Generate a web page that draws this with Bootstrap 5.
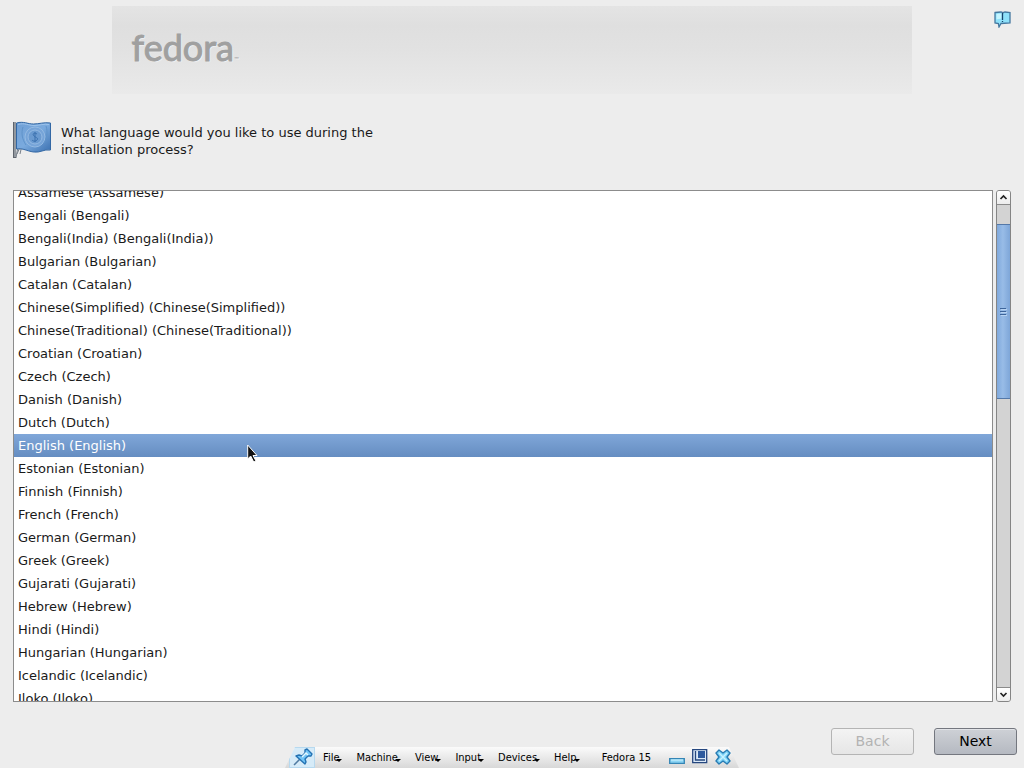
<!DOCTYPE html>
<html lang="en">
<head>
<meta charset="utf-8">
<meta name="viewport" content="width=device-width, initial-scale=1">
<title>Fedora 15 installer</title>
<link href="https://cdn.jsdelivr.net/npm/bootstrap@5.3.0/dist/css/bootstrap.min.css" rel="stylesheet">
<style>
body{background:#ededed;color:#1a1a1a;font:14px/17px "DejaVu Sans","Liberation Sans",sans-serif}
.banner{width:78.2%;height:91px;margin-top:6px;padding:20px 20px 0;background:linear-gradient(#e4e4e4,#dfdfdf 22%,#e1e1e1 45%,#e8e8e8 90%,#eaeaea)}
.wordmark{font:36px/42px Lato,sans-serif;color:#a0a0a0;-webkit-text-stroke:1px #a0a0a0;text-shadow:1px 1px 1px #f8f8f8}
.wordmark small{font-size:6px;-webkit-text-stroke:0}
.notes{top:11px;right:13px}
.question{max-width:330px;margin:0;font-size:13px}
.prompt{margin-top:27px;gap:8px;padding-left:13px}
.languages{margin:30px 13px 0;min-height:0;gap:3px}
.lang-list{overflow:hidden;border:1px solid #8c8c8c;border-radius:0;background:#fff}
.lang-list .list-group-item{flex:none;height:23px;padding:0 4px;border:0;font-size:13px;line-height:23px;color:#1a1a1a;background:#fff}
.lang-list .list-group-item.active{margin:0;color:#fff;background:linear-gradient(#80a7d9,#658dc1)}
.bar{width:15px;border:1px solid #858585;border-radius:3px;background:#d3d3d3;overflow:hidden}
.bar button{height:14px;padding:0;border:0;background:linear-gradient(#fff,#ececec);line-height:0}
.bar .up{border-bottom:1px solid #8b8b8b}
.bar .down{border-top:1px solid #8b8b8b}
.thumb{flex:174;border:solid #5478a8;border-width:1px 0;background:linear-gradient(90deg,#80a9dc,#98bce7 45%,#7ea6d8)}
.before{flex:19}
.after{flex:289}
.actions{margin:26px 7px 13px;gap:20px}
.actions .btn{width:83px;height:27px;padding:0;border-radius:3px;font-size:14px;line-height:25px}
.actions .next{color:#000;border-color:#74777f;background:linear-gradient(#ced1d6,#b5b9c1);box-shadow:inset 0 1px #e2e4e8}
.actions .back:disabled{opacity:1;color:#b3b3b3;border-color:#b4b4b4;background:linear-gradient(#f3f3f3,#e6e6e6)}
.vm{left:50%;margin-left:-227px;bottom:0;width:454px;height:21px;background:linear-gradient(#fbfbfb,#d8d8d8);clip-path:polygon(10px 0,444px 0,454px 100%,0 100%);font:11px/20px "DejaVu Sans Condensed","DejaVu Sans",sans-serif;color:#000}
.vm button{padding:0;border:0;background:none;color:#000;line-height:20px}
.vm .pin{width:26px;height:21px;margin-left:4px;border:1px solid #b7d9ef;background:#d6ebf8;line-height:0}
.vm .menus{margin-left:8px;gap:14px}
.vm .menus svg{margin:6px 0 0 -3px}
.vm .caption{margin-left:22px;line-height:22px}
.vm .tools{margin-left:18px;gap:7px}
.vm .tools button{line-height:0;height:19px}
.pointer{left:247px;top:444px;z-index:5;pointer-events:none}
svg{display:block}
</style>
</head>
<body class="vh-100 d-flex flex-column position-relative overflow-hidden">
<header class="banner mx-auto"><div class="wordmark">fedora<small>™</small></div></header>
<button class="notes btn p-0 border-0 position-absolute" aria-label="Release notes">
<svg width="17" height="17" viewBox="0 0 17 17"><path d="M1 1.5 7 1l2 .7L11 1l5 .5V12l-9 .5L5 16l-.6-3.5L1 12z" fill="#8ee1fa" stroke="#44779f" stroke-width="1.3"/><path d="m2.5 3 5-.5v5l-5 1z" fill="#c5f5ff"/><path d="M8.5 2v7M8.5 10v1" stroke="#17456d" stroke-width="1.3"/></svg></button>
<div class="prompt d-flex align-items-center">
<svg width="40" height="39" viewBox="0 0 40 39"><defs><linearGradient id="f" x2="1" y2="1"><stop stop-color="#6f9fd5"/><stop offset=".5" stop-color="#7aaade"/><stop offset="1" stop-color="#3b70b0"/></linearGradient></defs><path d="m5 25-2 12M7 26l-3 7M9 24l-2 9" stroke="#777f89"/><path d="M1.5 1v36" stroke="#5e646d" stroke-width="3"/><path d="M2 1v35" stroke="#c6ccd2"/><path d="M3.5 2c7-2 11 1 17 1s10-2 17-1v27c-7-1-10 3-17 2s-10-4-17-3z" fill="url(#f)" stroke="#3267a4"/><path d="M5 3.500c7-2 10 1 16 1s10-2 15-1" fill="none" stroke="#9dc3eb"/><circle cx="22" cy="16" r="10" fill="#76a4d8" stroke="#94bae3"/><circle cx="22" cy="16" r="7" fill="#6a9ad0" stroke="#94bae3"/><path d="M24 13c-3-2-5 0-3 2s5 2 3 4c-2 2-4 1-5 0m3-8v10" fill="none" stroke="#3a70ae"/><path d="M10 6c-2 6-1 12 3 18m20-19c2 6 1 12-2 17" fill="none" stroke="#5f93ca"/></svg>
<p class="question" id="q">What language would you like to use during the installation process?</p></div>
<main class="languages flex-grow-1 d-flex">
<div class="lang-list list-group flex-grow-1" role="group" aria-labelledby="q" id="list">
<button class="list-group-item list-group-item-action">Assamese (Assamese)</button>
<button class="list-group-item list-group-item-action">Bengali (Bengali)</button>
<button class="list-group-item list-group-item-action">Bengali(India) (Bengali(India))</button>
<button class="list-group-item list-group-item-action">Bulgarian (Bulgarian)</button>
<button class="list-group-item list-group-item-action">Catalan (Catalan)</button>
<button class="list-group-item list-group-item-action">Chinese(Simplified) (Chinese(Simplified))</button>
<button class="list-group-item list-group-item-action">Chinese(Traditional) (Chinese(Traditional))</button>
<button class="list-group-item list-group-item-action">Croatian (Croatian)</button>
<button class="list-group-item list-group-item-action">Czech (Czech)</button>
<button class="list-group-item list-group-item-action">Danish (Danish)</button>
<button class="list-group-item list-group-item-action">Dutch (Dutch)</button>
<button class="list-group-item list-group-item-action active" aria-current="true">English (English)</button>
<button class="list-group-item list-group-item-action">Estonian (Estonian)</button>
<button class="list-group-item list-group-item-action">Finnish (Finnish)</button>
<button class="list-group-item list-group-item-action">French (French)</button>
<button class="list-group-item list-group-item-action">German (German)</button>
<button class="list-group-item list-group-item-action">Greek (Greek)</button>
<button class="list-group-item list-group-item-action">Gujarati (Gujarati)</button>
<button class="list-group-item list-group-item-action">Hebrew (Hebrew)</button>
<button class="list-group-item list-group-item-action">Hindi (Hindi)</button>
<button class="list-group-item list-group-item-action">Hungarian (Hungarian)</button>
<button class="list-group-item list-group-item-action">Icelandic (Icelandic)</button>
<button class="list-group-item list-group-item-action">Iloko (Iloko)</button>
</div>
<div class="bar d-flex flex-column">
<button class="up" aria-label="Scroll up"><svg width="13" height="13" viewBox="0 0 13 13"><path d="m3.5 8 3-3 3 3" fill="none" stroke="#222" stroke-width="1.7"/></svg></button>
<div class="before"></div>
<div class="thumb d-flex align-items-center justify-content-center"><svg width="7" height="8" viewBox="0 0 7 8"><path d="M0 .5h6M0 3.5h6M0 6.5h6" stroke="#3d659b"/><path d="M1 1.5h6M1 4.5h6M1 7.5h6" stroke="#b7d3f2"/></svg></div>
<div class="after"></div>
<button class="down" aria-label="Scroll down"><svg width="13" height="13" viewBox="0 0 13 13"><path d="m3.5 5 3 3 3-3" fill="none" stroke="#222" stroke-width="1.7"/></svg></button>
</div>
</main>
<footer class="actions d-flex justify-content-end"><button class="btn back" disabled>Back</button><button class="btn next">Next</button></footer>
<nav class="vm position-absolute d-flex" aria-label="Virtual machine">
<button class="pin" aria-label="Pin toolbar"><svg width="24" height="19" viewBox="0 0 24 19"><path d="m4 17 6-6" stroke="#507ba2" stroke-width="1.5"/><path d="m6 8 3-1 3 1 3-3 0-3 2-1 5 5-1 2-3 0-3 3 1 3-1 2z" fill="#72c5f6" stroke="#2472b3" stroke-width="1.4" stroke-linejoin="round"/><path d="m12 9 4-4 2 2" fill="none" stroke="#e4f8ff" stroke-width="1.5"/></svg></button>
<div class="menus d-flex">
<button class="d-flex align-items-center">File<svg width="6" height="4"><path d="M0 0h6L3 3z"/></svg></button>
<button class="d-flex align-items-center">Machine<svg width="6" height="4"><path d="M0 0h6L3 3z"/></svg></button>
<button class="d-flex align-items-center">View<svg width="6" height="4"><path d="M0 0h6L3 3z"/></svg></button>
<button class="d-flex align-items-center">Input<svg width="6" height="4"><path d="M0 0h6L3 3z"/></svg></button>
<button class="d-flex align-items-center">Devices<svg width="6" height="4"><path d="M0 0h6L3 3z"/></svg></button>
<button class="d-flex align-items-center">Help<svg width="6" height="4"><path d="M0 0h6L3 3z"/></svg></button>
</div>
<span class="caption text-nowrap">Fedora 15</span>
<div class="tools d-flex">
<button aria-label="Minimize"><svg width="16" height="17" viewBox="0 0 16 17"><path d="M.7 10.7h14.600v4.600H.7z" fill="#8bd4f4" stroke="#3485b5" stroke-width="1.3"/><path d="M2 12h12" stroke="#d4f6ff"/></svg></button>
<button aria-label="Restore"><svg width="16" height="17" viewBox="0 0 16 17"><path d="M.7 1.700h14v13H.7z" fill="#dbe9f7" stroke="#26477f" stroke-width="1.3"/><path d="M6 3h7v7H6z" fill="#2e5a9e"/><path d="M3.500 3v9H13" fill="none" stroke="#26477f" stroke-width="1.3"/></svg></button>
<button aria-label="Close"><svg width="16" height="17" viewBox="0 0 16 17"><path d="m1 5 3-3 4 3 4-3 3 3-3 4 3 4-3 3-4-3-4 3-3-3 3-4z" fill="#7dd2f7" stroke="#287cb3" stroke-width="1.4" stroke-linejoin="round"/><path d="m4 5 8 8m0-8-8 8" stroke="#c7f2ff" stroke-width="1.5"/></svg></button>
</div></nav>
<svg class="pointer position-absolute" width="12" height="20" viewBox="0 0 12 20"><path d="M.7 1v14l3-3 3 6 2.300-1-3-5.500h4z" fill="#111" stroke="#fff"/></svg>
<script src="https://cdn.jsdelivr.net/npm/bootstrap@5.3.0/dist/js/bootstrap.bundle.min.js"></script>
<script>document.getElementById('list').scrollTop = 10;</script>
</body>
</html>
